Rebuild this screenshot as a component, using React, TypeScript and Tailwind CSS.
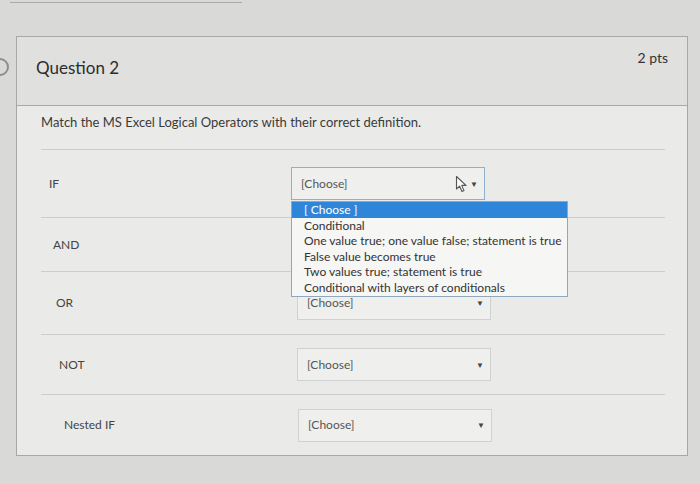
import React from 'react';

const OPTIONS = [
  '[ Choose ]',
  'Conditional',
  'One value true; one value false; statement is true',
  'False value becomes true',
  'Two values true; statement is true',
  'Conditional with layers of conditionals',
];

function Caret() {
  return <span className="text-[8px] text-[#444] leading-none">▼</span>;
}

function Pointer() {
  return (
    <svg width="14" height="18" viewBox="0 0 14 18" className="mr-[1px]">
      <path d="M1.5 1.5 L1.5 14 L4.6 11.2 L7 16.5 L9 15.6 L6.7 10.4 L11 10.4 Z" fill="#fafafa" stroke="#555" strokeWidth="1.1" strokeLinejoin="round" />
    </svg>
  );
}

function Select({ open = false, covered = false, ml }: { open?: boolean; covered?: boolean; ml: string }) {
  return (
    <div className={`relative ${ml} ${covered ? 'invisible' : ''}`}>
      <div
        className={`w-[194px] h-[33px] flex items-center justify-between pl-[9px] pr-[6px] bg-[#efefed] border ${
          open ? 'border-[#8fb0cf]' : 'border-[#cfd2d2]'
        }`}
      >
        <span className="text-[12px] text-[#555]">[Choose]</span>
        <span className="flex items-center">
          {open && <Pointer />}
          <Caret />
        </span>
      </div>
      {open && (
        <div className="absolute left-0 top-[34px] w-[277px] bg-[#f6f6f4] border border-[#8fa8bd] z-10 pb-[1px]">
          {OPTIONS.map((o, i) => (
            <div
              key={o}
              className={`h-[15.5px] pl-[12px] text-[12px] leading-[15.5px] whitespace-nowrap ${
                i === 0 ? 'bg-[#2f86d9] text-white' : 'text-[#333]'
              }`}
            >
              {o}
            </div>
          ))}
        </div>
      )}
    </div>
  );
}

const ROWS = [
  { label: 'IF', h: 'h-[68px]', pl: 'pl-[8px]', ml: 'ml-[0px]', open: true },
  { label: 'AND', h: 'h-[54px]', pl: 'pl-[12px]', ml: 'ml-[6px]', covered: true },
  { label: 'OR', h: 'h-[63px]', pl: 'pl-[15px]', ml: 'ml-[6px]' },
  { label: 'NOT', h: 'h-[60px]', pl: 'pl-[18px]', ml: 'ml-[6px]' },
  { label: 'Nested IF', h: 'h-[60px]', pl: 'pl-[23px]', ml: 'ml-[7px]' },
];

export default function App() {
  return (
    <div
      className="relative w-[700px] h-[484px] overflow-hidden bg-[#d9d9d7] pt-[36px]"
      style={{ fontFamily: 'Lato, "Open Sans", sans-serif' }}
    >
      {/* top edge of previous card */}
      <div className="absolute left-[10px] top-0 w-[232px] h-[3px] border-b border-[#a9a9a7]" />
      {/* nav ring peeking from left */}
      <div className="absolute -left-[9px] top-[58px] w-[18px] h-[18px] rounded-full border-2 border-[#8d8d8b]" />

      <div className="ml-[16px] w-[672px] border border-[#a8a8a6] bg-[#eaeae8]">
        <div className="h-[69px] bg-[#e0e0de] border-b border-[#a9a9a7] flex justify-between px-[19px]">
          <span className="mt-[18px] text-[17px] text-[#2d2d2d]">Question 2</span>
          <span className="mt-[10px] text-[14px] text-[#333]">2 pts</span>
        </div>
        <div className="pl-[24px] pr-[22px]">
          <div className="h-[44px] pt-[7px] text-[13px] text-[#3a3a3a] border-b border-[#cdcdcb]">
            Match the MS Excel Logical Operators with their correct definition.
          </div>
          {ROWS.map((r, i) => (
            <div
              key={r.label}
              className={`${r.h} flex items-center ${i < ROWS.length - 1 ? 'border-b border-[#cdcdcb]' : ''}`}
            >
              <span className={`w-[250px] ${r.pl} text-[12px] text-[#444]`}>{r.label}</span>
              <Select open={r.open} covered={r.covered} ml={r.ml} />
            </div>
          ))}
        </div>
      </div>
    </div>
  );
}
